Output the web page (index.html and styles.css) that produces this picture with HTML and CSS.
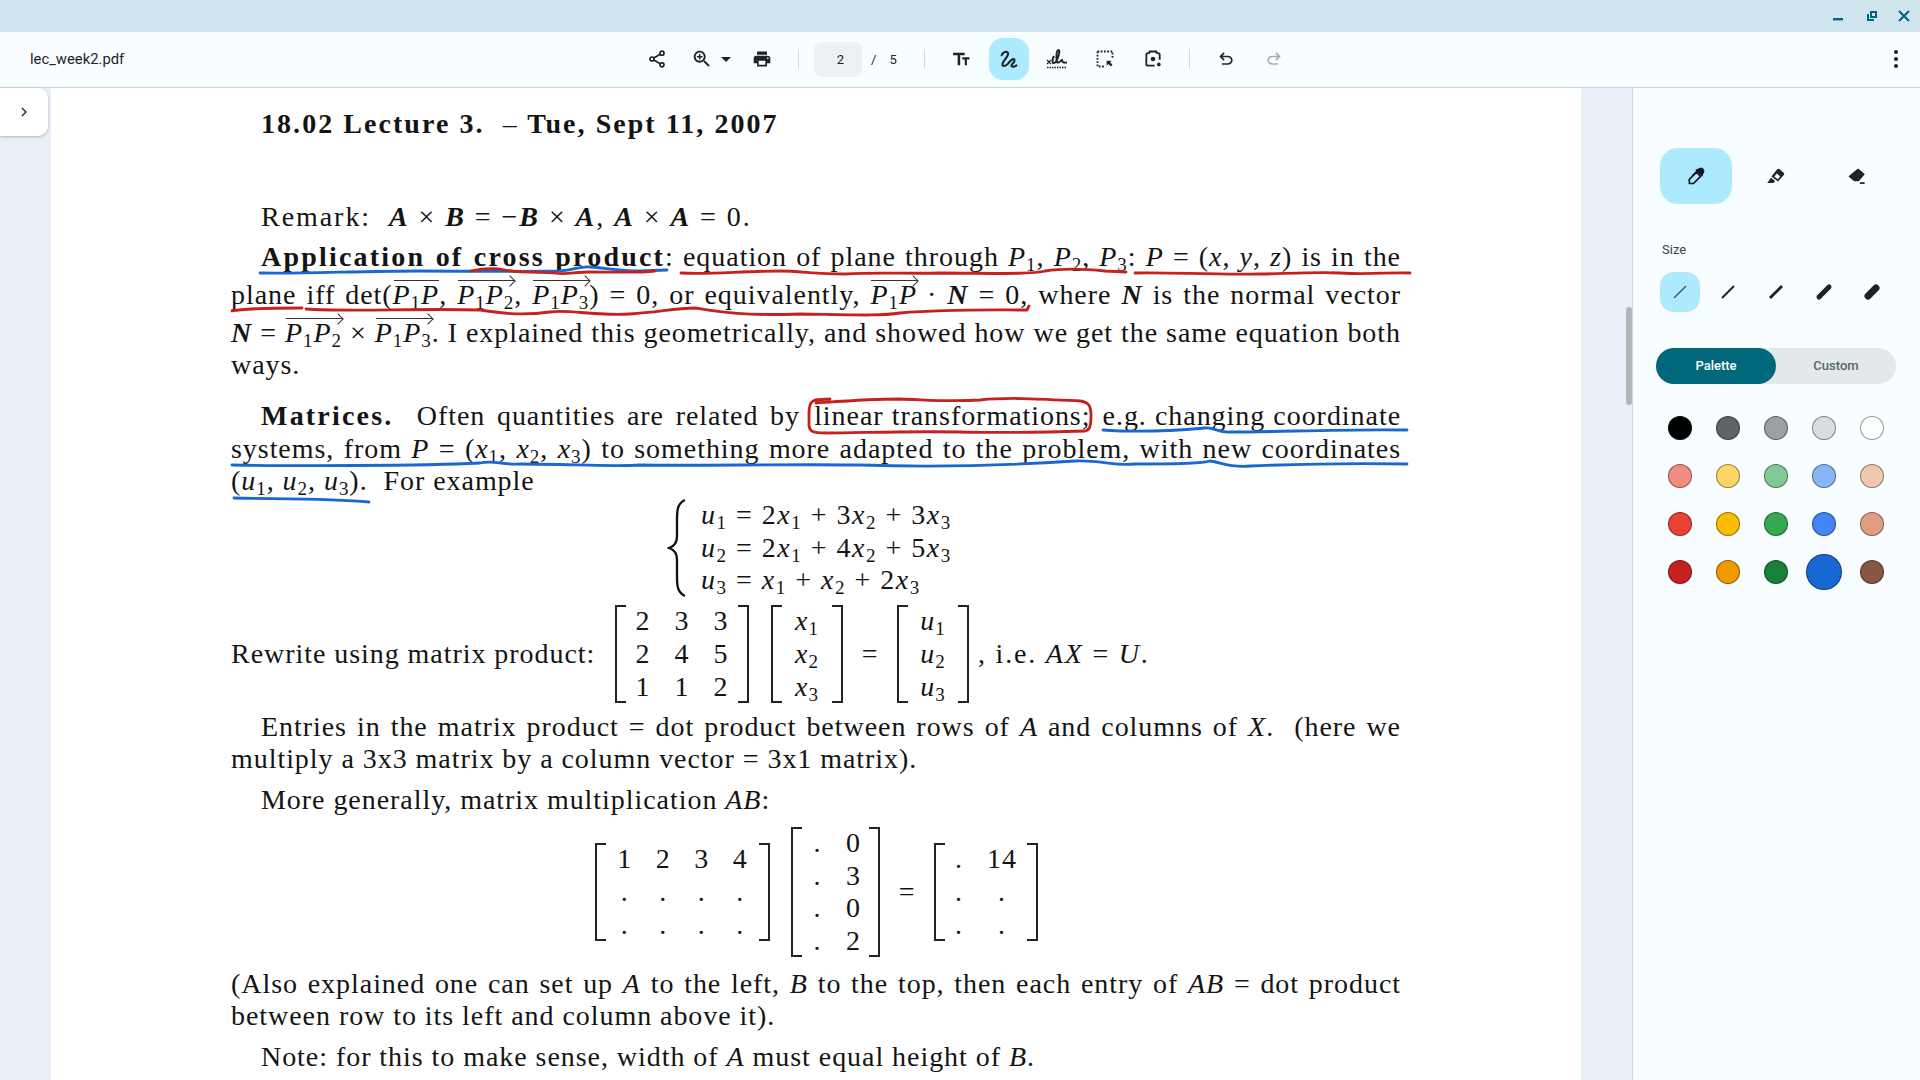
FILE: index.html
```html
<!DOCTYPE html>
<html lang="en">
<head>
  <meta charset="UTF-8">
  <title>lec_week2.pdf</title>
  <link rel="stylesheet" href="styles.css">
</head>
<body>
  <div class="titlebar">
    <svg class="win" viewBox="0 0 16 16"><path d="M1 10h10v2.400H1z"/></svg>
    <svg class="win" viewBox="0 0 16 16"><path d="M3 6v7h7v-2H5V6zM6 3v7h7V3zm2 2h3v3H8z" fill-rule="evenodd"/></svg>
    <svg class="win" viewBox="0 0 16 16"><path d="M3 3l10 10M13 3L3 13" fill="none" stroke="#00687a" stroke-width="2.200"/></svg>
  </div>

  <div class="toolbar">
    <div class="filename">lec_week2.pdf</div>
    <div class="tools">
      <span class="slot"><svg viewBox="0 0 24 24" fill="none" stroke="#1f2326" stroke-width="2"><circle cx="18" cy="5" r="2.400"/><circle cx="6" cy="12" r="2.400"/><circle cx="18" cy="19" r="2.400"/><path d="M8.200 10.800l7.600-4.500M8.200 13.200l7.600 4.500"/></svg></span>
      <span class="slot zoomslot">
        <svg viewBox="0 0 24 24" fill="#1f2326"><path d="M15.500 14h-.79l-.28-.27C15.410 12.590 16 11.110 16 9.500 16 5.910 13.090 3 9.500 3S3 5.910 3 9.500 5.910 16 9.500 16c1.610 0 3.090-.59 4.230-1.570l.27.28v.79l5 4.990L20.490 19l-4.990-5zm-6 0C7.010 14 5 11.990 5 9.500S7.010 5 9.500 5 14 7.010 14 9.500 11.990 14 9.500 14z"/><path d="M12.500 10.300h-2.200v2.200H8.700v-2.200H6.500V8.700h2.200V6.500h1.600v2.200h2.200z"/></svg>
        <span class="caret"></span>
      </span>
      <span class="slot"><svg viewBox="0 0 24 24" fill="#1f2326"><path d="M19 8H5c-1.660 0-3 1.340-3 3v6h4v4h12v-4h4v-6c0-1.660-1.340-3-3-3zm-3 11H8v-5h8v5zm3-7c-.55 0-1-.45-1-1s.45-1 1-1 1 .45 1 1-.45 1-1 1zm-1-9H6v4h12V3z"/></svg></span>
      <span class="sep sep-a"></span>
      <span class="pagebox">2</span>
      <span class="pagenum">/</span>
      <span class="pagenum total">5</span>
      <span class="sep sep-b"></span>
      <span class="slot"><svg viewBox="0 0 24 24" fill="#1f2326"><path d="M2.500 4.500v3h5.500v12h3v-12h5.500v-3zM13.500 10v2.600h3v6.900h2.600v-6.900h3V10z"/></svg></span>
      <span class="slot"><span class="inkbtn"><svg viewBox="0 0 24 24" fill="none" stroke="#1f2326" stroke-width="2.300" stroke-linecap="round" stroke-linejoin="round"><path d="M4 8C5 4 10 3 11 5.500C12 9 6 13 5 17C4 20.500 8 20.500 11 17C13 14 17 10.500 18 13C19 16 13 18 15 20C16 21 19 20 20 19"/></svg></span></span>
      <span class="slot"><svg class="sign" viewBox="0 0 24 24" fill="none" stroke="#1f2326"><path d="M9 9C7 12 7 16 9 16C12 16 16 3 13.500 3C11 3 11 14 12.500 15.500C14 16.500 16 13 17 13C17 15 18 16 22 15.500" stroke-width="2"/><path d="M2 13l4 4M6 13l-4 4" stroke-width="1.100"/><path d="M2 20.500h20" stroke-width="1.300" stroke-dasharray="1.500 1"/></svg></span>
      <span class="slot"><svg viewBox="0 0 24 24" fill="none" stroke="#1f2326" stroke-width="2.200"><path d="M3 3H21V12M3 3V21H12" stroke-dasharray="2.200 1.700"/><path d="M14 14h6l-2 2 3 3-2 2-3-3-2 2z" fill="#1f2326" stroke="none"/></svg></span>
      <span class="slot"><svg viewBox="0 0 24 24" fill="none" stroke="#1f2326" stroke-width="2.200"><path d="M8 5H6a2 2 0 0 0-2 2v11a2 2 0 0 0 2 2h8M16 5h2a2 2 0 0 1 2 2v6M8 5V3h8v2"/><circle cx="12" cy="12" r="2.800" fill="#1f2326" stroke="none"/><circle cx="19" cy="18.500" r="2.200" fill="#1f2326" stroke="none"/></svg></span>
      <span class="sep sep-c"></span>
      <span class="slot"><svg viewBox="0 0 24 24" fill="#1f2326"><path d="M7 19v-2h7.100q1.580 0 2.740-1 1.160-1 1.160-2.500T16.840 11q-1.160-1-2.740-1H7.800l2.600 2.600L9 14 4 9l5-5 1.400 1.400L7.800 8h6.300q2.420 0 4.160 1.580Q20 11.150 20 13.500q0 2.350-1.740 3.930Q16.520 19 14.100 19H7z"/></svg></span>
      <span class="slot"><svg class="redo" viewBox="0 0 24 24" fill="#a9adb0"><path d="M7 19v-2h7.100q1.580 0 2.740-1 1.160-1 1.160-2.500T16.840 11q-1.160-1-2.740-1H7.800l2.600 2.600L9 14 4 9l5-5 1.400 1.400L7.800 8h6.300q2.420 0 4.160 1.580Q20 11.150 20 13.500q0 2.350-1.740 3.930Q16.520 19 14.100 19H7z"/></svg></span>
    </div>
    <div class="kebab"><i></i><i></i><i></i></div>
  </div>

  <div class="main">
    <div class="gutter">
      <div class="sidetoggle"><svg viewBox="0 0 24 24" fill="none" stroke="#1f2326" stroke-width="2"><path d="M9 6l6 6-6 6"/></svg></div>
    </div>

    <div class="page">
      <div class="ln title in">18.02 Lecture 3. &nbsp;<span class="thin">–</span> Tue, Sept 11, 2007</div>

      <div class="ln in remark">Remark: &nbsp;<b><i>A</i></b> × <b><i>B</i></b> = −<b><i>B</i></b> × <b><i>A</i></b>, <b><i>A</i></b> × <b><i>A</i></b> = 0.</div>

      <div class="ln j in app"><b class="lead">Application of cross product</b>: equation of plane through <i>P</i><sub>1</sub>, <i>P</i><sub>2</sub>, <i>P</i><sub>3</sub>: <i>P</i> = (<i>x</i>, <i>y</i>, <i>z</i>) is in the</div>
      <div class="ln j gap6">plane iff det(<span class="vec bar"><i>P</i><sub>1</sub><i>P</i></span>, <span class="vec"><i>P</i><sub>1</sub><i>P</i><sub>2</sub></span>, <span class="vec"><i>P</i><sub>1</sub><i>P</i><sub>3</sub></span>) = 0, or equivalently, <span class="vec"><i>P</i><sub>1</sub><i>P</i></span> · <b><i>N</i></b> = 0, where <b><i>N</i></b> is the normal vector</div>
      <div class="ln j gap6"><b><i>N</i></b> = <span class="vec"><i>P</i><sub>1</sub><i>P</i><sub>2</sub></span> × <span class="vec"><i>P</i><sub>1</sub><i>P</i><sub>3</sub></span>. I explained this geometrically, and showed how we get the same equation both</div>
      <div class="ln">ways.</div>

      <div class="ln j in gap19"><span class="wide"><b class="lead">Matrices.</b> &nbsp;Often quantities are related by</span> <span class="boxed">linear transformations;</span> e.g. changing coordinate</div>
      <div class="ln j gap1">systems, from <i>P</i> = (<i>x</i><sub>1</sub>, <i>x</i><sub>2</sub>, <i>x</i><sub>3</sub>) to something more adapted to the problem, with new coordinates</div>
      <div class="ln">(<i>u</i><sub>1</sub>, <i>u</i><sub>2</sub>, <i>u</i><sub>3</sub>). &nbsp;For example</div>

      <div class="system">
        <svg class="brace" viewBox="0 0 20 100" fill="none" stroke="#111" stroke-width="2.400"><path d="M18 1C10 5 10 12 10 22V38C10 44 8 48 2 50C8 52 10 56 10 62V78C10 88 10 95 18 99"/></svg>
        <div class="eqs">
          <div><i>u</i><sub>1</sub> = 2<i>x</i><sub>1</sub> + 3<i>x</i><sub>2</sub> + 3<i>x</i><sub>3</sub></div>
          <div><i>u</i><sub>2</sub> = 2<i>x</i><sub>1</sub> + 4<i>x</i><sub>2</sub> + 5<i>x</i><sub>3</sub></div>
          <div><i>u</i><sub>3</sub> = <i>x</i><sub>1</sub> + <i>x</i><sub>2</sub> + 2<i>x</i><sub>3</sub></div>
        </div>
      </div>

      <div class="rewrite">
        <span class="rw-text">Rewrite using matrix product:</span>
        <div class="mat m233"><span>2</span><span>3</span><span>3</span><span>2</span><span>4</span><span>5</span><span>1</span><span>1</span><span>2</span></div>
        <div class="mat col x1"><span><i>x</i><sub>1</sub></span><span><i>x</i><sub>2</sub></span><span><i>x</i><sub>3</sub></span></div>
        <span class="eq">=</span>
        <div class="mat col u1"><span><i>u</i><sub>1</sub></span><span><i>u</i><sub>2</sub></span><span><i>u</i><sub>3</sub></span></div>
        <span class="ie">, i.e. <i>AX</i> = <i>U</i>.</span>
      </div>

      <div class="ln j in gap8">Entries in the matrix product = dot product between rows of <i>A</i> and columns of <i>X</i>. &nbsp;(here we</div>
      <div class="ln">multiply a 3x3 matrix by a column vector = 3x1 matrix).</div>
      <div class="ln in gap9">More generally, matrix multiplication <i>AB</i>:</div>

      <div class="product">
        <div class="mat m34"><span>1</span><span>2</span><span>3</span><span>4</span><span>.</span><span>.</span><span>.</span><span>.</span><span>.</span><span>.</span><span>.</span><span>.</span></div>
        <div class="mat m42"><span>.</span><span>0</span><span>.</span><span>3</span><span>.</span><span>0</span><span>.</span><span>2</span></div>
        <span class="eq eq2">=</span>
        <div class="mat m32"><span>.</span><span>14</span><span>.</span><span>.</span><span>.</span><span>.</span></div>
      </div>

      <div class="ln j gap8">(Also explained one can set up <i>A</i> to the left, <i>B</i> to the top, then each entry of <i>AB</i> = dot product</div>
      <div class="ln">between row to its left and column above it).</div>
      <div class="ln in gap9">Note: for this to make sense, width of <i>A</i> must equal height of <i>B</i>.</div>

      <svg class="ink" viewBox="51 88 1530 992" fill="none" stroke-width="2.800" stroke-linecap="round" stroke-linejoin="round">
        <path stroke="#1967d2" d="M260 273C300 274 360 271 420 271C470 271 520 272 560 271C575 270 580 266 590 267C605 268 620 271 640 271L667 270"/>
        <path stroke="#c5221f" d="M471 271C485 268 495 268 505 270C520 273 545 272 555 273C565 275 575 272 590 272C610 272 640 273 655 271"/>
        <path stroke="#c5221f" d="M681 273C710 275 740 271 780 271C800 271 815 274 845 274C880 272 910 274 940 273C985 273 1030 275 1045 271C1065 268 1085 269 1105 271L1126 272"/>
        <path stroke="#c5221f" d="M1135 273C1170 272 1210 275 1260 274C1310 273 1320 272 1340 273C1370 275 1390 272 1410 273"/>
        <path stroke="#c5221f" d="M232 311C245 308 280 308 302 308"/>
        <path stroke="#c5221f" d="M306 309C350 312 420 308 480 310C500 313 520 316 550 312C570 309 590 316 630 314C660 312 675 308 695 308C720 312 740 316 800 314C860 315 880 316 900 313C950 309 990 310 1027 310L1029 306"/>
        <path stroke="#c5221f" d="M830 399L815 400C810 402 809 406 809 415L809 426C810 432 814 433 825 433C860 433 900 431 960 432C1000 433 1050 432 1085 431C1090 430 1091 426 1091 415C1091 405 1088 402 1080 401C1040 399 1010 397 980 400C950 402 930 400 900 399C870 399 845 401 816 403"/>
        <path stroke="#1967d2" d="M1103 430C1130 432 1170 431 1205 428C1215 427 1218 433 1230 432C1280 432 1340 429 1407 430"/>
        <path stroke="#1967d2" d="M232 465C290 466 420 466 480 463C495 460 500 465 520 464C570 464 610 467 640 465C700 466 780 464 860 465C950 468 1030 464 1075 461C1100 460 1115 466 1135 464C1170 464 1200 464 1210 461C1220 462 1230 468 1250 466C1300 464 1360 463 1407 464"/>
        <path stroke="#1967d2" d="M234 498C270 499 330 498 369 502"/>
      </svg>
    </div>

    <div class="gutter right"><div class="thumb"></div></div>

    <div class="panel">
      <div class="penrow">
        <div class="tool on"><svg viewBox="0 0 24 24" fill="none" stroke="#0f1416" stroke-width="2" stroke-linejoin="round"><path d="M4 21v-5L12.500 7.500l5 5L9 21z"/><path d="M11 4.500L17.500 2C19.500 1.500 22.500 4.500 22 6.500L19.500 13z" fill="#0f1416" stroke="none"/><path d="M8 11.500l6-6"/></svg></div>
        <div class="tool"><svg viewBox="0 0 24 24" fill="#1f2326"><path d="M16 3.500L21.500 8.500C22 9.300 22 10 21.300 10.800L14.500 18.500L6.500 12.500L13.500 4C14.500 3 15.300 3 16 3.500z"/><path d="M6 14l5 4-2 2.500H1.500z"/><path d="M10 12.500L13 9l4 3.500-3 3.500z" fill="#f8fdff"/></svg></div>
        <div class="tool"><svg viewBox="0 0 24 24" fill="#1f2326" stroke="#1f2326" stroke-width="1.500" stroke-linejoin="round"><path d="M14.500 4l7 6-6.500 7.500H10L4 12.500z"/><path d="M17 20h5v1h-5z" stroke-width="1"/></svg></div>
      </div>
      <div class="sizelabel">Size</div>
      <div class="sizes">
        <div class="size on"><svg viewBox="0 0 40 40"><path d="M14 26l12-12" stroke="#46565c" stroke-width="1.500"/></svg></div>
        <div class="size"><svg viewBox="0 0 40 40"><path d="M14 26l12-12" stroke="#1f2326" stroke-width="2"/></svg></div>
        <div class="size"><svg viewBox="0 0 40 40"><path d="M14 26l12-12" stroke="#1f2326" stroke-width="3"/></svg></div>
        <div class="size"><svg viewBox="0 0 40 40"><path d="M15 25l10-10" stroke="#1f2326" stroke-width="5" stroke-linecap="round"/></svg></div>
        <div class="size"><svg viewBox="0 0 40 40"><path d="M16 24l8-8" stroke="#1f2326" stroke-width="7" stroke-linecap="round"/></svg></div>
      </div>
      <div class="toggle"><span class="seg active">Palette</span><span class="seg">Custom</span></div>
      <div class="swatches">
        <span class="sw c1"></span><span class="sw c2"></span><span class="sw c3"></span><span class="sw c4"></span><span class="sw c5"></span>
        <span class="sw c6"></span><span class="sw c7"></span><span class="sw c8"></span><span class="sw c9"></span><span class="sw c10"></span>
        <span class="sw c11"></span><span class="sw c12"></span><span class="sw c13"></span><span class="sw c14"></span><span class="sw c15"></span>
        <span class="sw c16"></span><span class="sw c17"></span><span class="sw c18"></span><span class="sw c19 big"></span><span class="sw c20"></span>
      </div>
    </div>
  </div>
</body>
</html>
```

FILE: styles.css
```css
* {
  box-sizing: border-box;
}
html, body {
  margin: 0;
  height: 100%;
  overflow: hidden;
}
body {
  font-family: Roboto, sans-serif;
  background: #f8fdff;
  color: #1f2326;
}

/* window title bar */
.titlebar {
  height: 32px;
  background: #cfe6ee;
  display: flex;
  justify-content: flex-end;
  align-items: center;
}
.win {
  width: 16px;
  height: 16px;
  margin: 0 8px;
  fill: #00687a;
}

/* toolbar */
.toolbar {
  height: 56px;
  padding-bottom: 1px;
  background: #f8fdff;
  border-bottom: 1px solid #cdd3d6;
  display: flex;
  align-items: center;
}
.filename {
  width: 633px;
  padding-left: 30px;
  font-size: 14.8px;
}
.tools {
  display: flex;
  align-items: center;
}
.slot {
  width: 48px;
  height: 48px;
  display: flex;
  align-items: center;
  justify-content: center;
}
.slot svg {
  width: 20px;
  height: 20px;
}
.slot svg.sign {
  width: 24px;
  height: 24px;
}
.zoomslot {
  width: 57px;
  padding-right: 7px;
  gap: 8px;
}
.zoomslot svg {
  width: 22px;
  height: 22px;
  margin-left: 9px;
}
.caret {
  width: 0;
  height: 0;
  border-left: 5px solid transparent;
  border-right: 5px solid transparent;
  border-top: 5px solid #1f2326;
}
.redo {
  transform: scaleX(-1);
}
.sep {
  width: 1px;
  height: 20px;
  background: #d4d9dc;
}
.sep-a {
  margin-left: 12px;
  margin-right: 15px;
}
.sep-b {
  margin-left: 27px;
  margin-right: 12px;
}
.sep-c {
  margin-left: 12px;
  margin-right: 12px;
}
.pagebox {
  width: 48px;
  height: 35px;
  border-radius: 8px;
  background: #eef1f3;
  font-size: 13px;
  display: flex;
  align-items: center;
  justify-content: center;
  padding-left: 5px;
}
.pagenum {
  font-size: 13px;
  margin-left: 9px;
}
.pagenum.total {
  margin-left: 13px;
}
.inkbtn {
  width: 40px;
  height: 42px;
  border-radius: 14px;
  background: #aeeaff;
  display: flex;
  align-items: center;
  justify-content: center;
}
.slot .inkbtn svg {
  width: 22px;
  height: 22px;
}
.kebab {
  margin-left: auto;
  margin-right: 22px;
  display: flex;
  flex-direction: column;
  gap: 3px;
}
.kebab i {
  width: 4px;
  height: 4px;
  border-radius: 50%;
  background: #1f2326;
}

/* main area */
.main {
  display: flex;
  height: 992px;
}
.gutter {
  width: 51px;
  flex: none;
  background: #e9f1f8;
}
.gutter.right {
  border-right: 1px solid #d3d8db;
  width: 52px;
  padding-left: 45px;
  padding-top: 219px;
}
.thumb {
  width: 6px;
  height: 98px;
  border-radius: 3px;
  background: #b1b8ba;
}
.sidetoggle {
  width: 48px;
  height: 48px;
  background: #fff;
  border-radius: 0 10px 10px 0;
  box-shadow: 0 1px 3px rgba(60, 64, 67, .35);
  display: flex;
  align-items: center;
  justify-content: center;
}
.sidetoggle svg {
  width: 16px;
  height: 16px;
}

/* pdf page */
.page {
  position: relative;
  width: 1530px;
  flex: none;
  height: 992px;
  overflow: hidden;
  background: #fff;
  padding-left: 180px;
  padding-right: 180px;
  font-family: "Liberation Serif", serif;
  font-size: 28px;
  letter-spacing: .95px;
  color: #141414;
}
.ln {
  height: 32px;
  line-height: 32px;
  white-space: nowrap;
}
.in {
  padding-left: 30px;
}
.j {
  text-align: justify;
  text-align-last: justify;
}
.title {
  margin-top: 20px;
  font-weight: bold;
  letter-spacing: 2.05px;
}
.thin {
  font-weight: normal;
}
.lead {
  letter-spacing: 2.2px;
}
.wide {
  word-spacing: 3.5px;
}
.boxed {
  margin-left: 6px;
  margin-right: 4px;
}
.remark {
  margin-top: 61px;
  letter-spacing: 1.95px;
}
.app {
  margin-top: 8px;
}
.gap1 {
  margin-top: 1px;
}
.gap6 {
  margin-top: 6px;
}
.gap8 {
  margin-top: 8px;
}
.gap9 {
  margin-top: 9px;
}
.gap19 {
  margin-top: 19px;
}
sub {
  font-size: .68em;
  line-height: 0;
  vertical-align: -.28em;
  font-style: normal;
}
.vec {
  position: relative;
  display: inline-block;
  line-height: 32px;
}
.vec::before {
  content: "";
  position: absolute;
  left: 1px;
  right: 0;
  top: 1px;
  border-top: 1.5px solid #333;
}
.vec::after {
  content: "";
  position: absolute;
  right: 0;
  top: -2px;
  width: 7px;
  height: 7px;
  border-top: 1.5px solid #333;
  border-right: 1.5px solid #333;
  transform: rotate(45deg);
}
.vec.bar::after {
  display: none;
}

/* equations */
.system {
  display: flex;
  margin-top: 2px;
  margin-left: 436px;
  height: 98px;
}
.brace {
  width: 20px;
  height: 98px;
  margin-right: 14px;
}
.eqs {
  letter-spacing: 1.5px;
}
.eqs div {
  height: 32.5px;
  line-height: 32.5px;
  white-space: nowrap;
}
.rewrite {
  display: flex;
  align-items: center;
  height: 98px;
  margin-top: 8px;
}
.rw-text {
  width: 384px;
  white-space: nowrap;
}
.mat {
  display: grid;
  position: relative;
  justify-items: center;
  align-items: center;
  border-left: 2px solid #222;
  border-right: 2px solid #222;
  height: 98px;
  line-height: 32px;
  grid-auto-rows: 1fr;
}
.mat::before {
  content: "";
  position: absolute;
  left: 0;
  right: 0;
  height: 100%;
  top: 0;
  background:
    linear-gradient(#222, #222) left top / 9px 2px no-repeat,
    linear-gradient(#222, #222) right top / 9px 2px no-repeat,
    linear-gradient(#222, #222) left bottom / 9px 2px no-repeat,
    linear-gradient(#222, #222) right bottom / 9px 2px no-repeat;
}
.m233 {
  width: 134px;
  grid-template-columns: repeat(3, 39px);
  justify-content: center;
}
.x1 {
  width: 72px;
  margin-left: 22px;
}
.eq {
  width: 54px;
  text-align: center;
}
.u1 {
  width: 72px;
}
.ie {
  margin-left: 9px;
  white-space: nowrap;
  letter-spacing: 1.8px;
}
.product {
  display: flex;
  align-items: center;
  height: 130px;
  margin-top: 11px;
  margin-left: 364px;
}
.m34 {
  width: 175px;
  height: 98px;
  grid-template-columns: repeat(4, 38.5px);
  justify-content: center;
}
.m42 {
  width: 89px;
  height: 130px;
  margin-left: 21px;
  grid-template-columns: 36px 36px;
  justify-content: center;
}
.eq2 {
  width: 54px;
}
.m32 {
  width: 104px;
  height: 98px;
  padding-right: 11px;
  grid-template-columns: 43px 43px;
  justify-content: center;
}
.product + .ln {
  margin-top: 11px;
}

/* pen strokes */
.ink {
  position: absolute;
  left: 0;
  top: 0;
  width: 1530px;
  height: 992px;
}

/* right panel */
.panel {
  width: 287px;
  flex: none;
  background: #f8fdff;
  padding-top: 60px;
  padding-left: 27px;
}
.penrow {
  display: flex;
  gap: 8px;
}
.tool {
  width: 72px;
  height: 56px;
  border-radius: 18px;
  display: flex;
  align-items: center;
  justify-content: center;
}
.tool svg {
  width: 20px;
  height: 20px;
}
.tool.on {
  background: #aeeaff;
}
.sizelabel {
  margin-top: 38px;
  height: 16px;
  line-height: 16px;
  font-size: 13px;
  padding-left: 2px;
  color: #3c4447;
}
.sizes {
  display: flex;
  gap: 8px;
  margin-top: 14px;
}
.size {
  width: 40px;
  height: 40px;
  border-radius: 14px;
  display: flex;
}
.size.on {
  background: #aeeaff;
}
.toggle {
  display: flex;
  width: 240px;
  height: 36px;
  margin-top: 36px;
  margin-left: -4px;
  border-radius: 18px;
  background: #e3e8eb;
}
.seg {
  width: 120px;
  border-radius: 18px;
  font-size: 13px;
  font-weight: 500;
  padding-bottom: 1px;
  color: #55666d;
  display: flex;
  align-items: center;
  justify-content: center;
}
.seg.active {
  background: #00687a;
  color: #fff;
}
.swatches {
  display: grid;
  grid-template-columns: repeat(5, 48px);
  grid-auto-rows: 48px;
  margin-top: 20px;
  margin-left: -4px;
  justify-items: center;
  align-items: center;
}
.sw {
  width: 24px;
  height: 24px;
  border-radius: 50%;
  border: 1px solid rgba(0, 0, 0, .42);
}
.sw.big {
  width: 36px;
  height: 36px;
}
.c1 { background: #000; }
.c2 { background: #5f6368; }
.c3 { background: #9aa0a6; }
.c4 { background: #dadce0; }
.c5 { background: #fff; }
.c6 { background: #f28b82; }
.c7 { background: #fdd663; }
.c8 { background: #81c995; }
.c9 { background: #8ab4f8; }
.c10 { background: #eec9ae; }
.c11 { background: #ea4335; }
.c12 { background: #fbbc04; }
.c13 { background: #34a853; }
.c14 { background: #4285f4; }
.c15 { background: #e19d82; }
.c16 { background: #c5221f; }
.c17 { background: #f29900; }
.c18 { background: #188038; }
.c19 { background: #1967d2; }
.c20 { background: #855843; }
```
